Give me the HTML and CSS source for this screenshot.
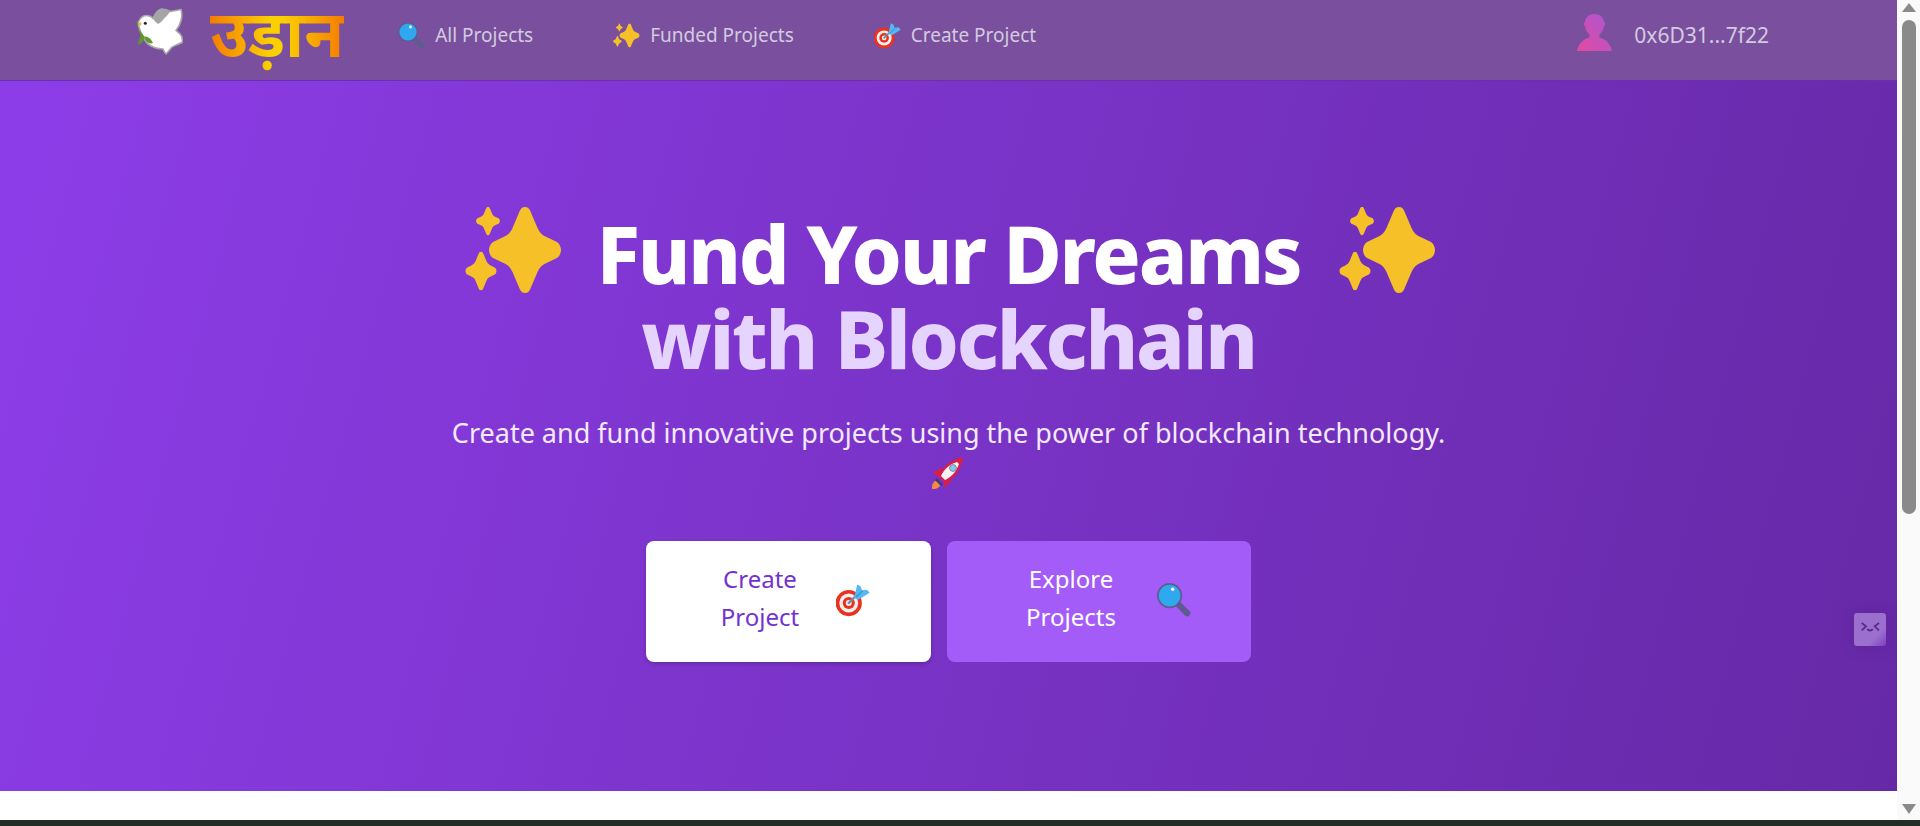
FILE: index.html
```html
<!DOCTYPE html>
<html lang="hi">
<head>
<meta charset="UTF-8" />
<meta name="viewport" content="width=device-width, initial-scale=1" />
<title>उड़ान</title>
<link rel="stylesheet" href="styles.css">
</head>
<body>

<svg class="defs" width="0" height="0" aria-hidden="true">
  <defs>
    <linearGradient id="userFill" x1="0" y1="1" x2="1" y2="0">
      <stop offset="0" stop-color="#e34a9f" />
      <stop offset="1" stop-color="#a957d6" />
    </linearGradient>
    <path id="star" d="M0 -43C3 -43 4.500 -41 5.500 -38.500L12.500 -22C14.500 -17.500 17 -15 21.500 -13L32 -8C34.500 -6.500 36 -3 36 0C36 3 34.500 6.500 32 8L21.500 13C17 15 14.500 17.500 12.500 22L5.500 38.500C4.500 41 3 43 0 43C-3 43 -4.500 41 -5.500 38.500L-12.500 22C-14.500 17.500 -17 15 -21.500 13L-32 8C-34.500 6.500 -36 3 -36 0C-36 -3 -34.500 -6.500 -32 -8L-21.500 -13C-17 -15 -14.500 -17.500 -12.500 -22L-5.500 -38.500C-4.500 -41 -3 -43 0 -43Z" />
    <symbol id="sparkles" viewBox="0 0 98 86">
      <g fill="#f5c028">
        <use href="#star" transform="translate(60 43)" />
        <use href="#star" transform="translate(23 14) scale(.33)" />
        <use href="#star" transform="translate(16 64) scale(.43 .45)" />
      </g>
    </symbol>
    <symbol id="target" viewBox="0 0 28 27">
      <circle cx="10.500" cy="16" r="10.800" fill="#e8331f" />
      <circle cx="10.500" cy="16" r="7.800" fill="#f3eeee" />
      <circle cx="10.500" cy="16" r="5" fill="#e8331f" />
      <circle cx="10.500" cy="16" r="2.400" fill="#f3eeee" />
      <path d="M10 16.500L17 9.500" stroke="#6f8fa8" stroke-width="1.800" />
      <path d="M15 11.500L17.500 .7L20 2L21.500 5.500L25.500 5L27.700 7.500L18 13.500Z" fill="#55b8f2" />
      <path d="M16.500 11L22 6" stroke="#2f8fd8" stroke-width="1" />
    </symbol>
    <symbol id="magnifier" viewBox="0 0 27 27">
      <path d="M16 16L24 24" stroke="#5f5a90" stroke-width="5" stroke-linecap="round" />
      <circle cx="10" cy="10" r="9.300" fill="#2ea9ef" stroke="#5f5a90" stroke-width="1.400" />
      <circle cx="12.500" cy="5" r="1.400" fill="#fff" />
    </symbol>
    <symbol id="rocket" viewBox="0 0 33 33">
      <path d="M0 33C-.5 29 1 26 4 24.500L8.500 29C7 32 4 33.500 0 33Z" fill="#f58a3c" />
      <path d="M4.500 22L11 28.500L9 30L3 24Z" fill="#3d3a78" />
      <path d="M10 11L.5 17L7 21ZM21 23L12 32L12 26Z" fill="#d81f4a" />
      <path d="M31 1C20 3 11 10 6 20L13 27C24 22 30 12 31 1Z" fill="#d81f4a" />
      <path d="M25 6C18 8 12 13 9 20L13 24C20 21 25 14 27 8Z" fill="#f7f3f3" />
      <circle cx="21" cy="12" r="3.400" fill="#8cc6ee" stroke="#7a8aa0" stroke-width="1" />
    </symbol>
    <symbol id="dove" viewBox="0 0 48 47">
      <path d="M3 15C5 10 8 7.500 11 7.500C14 7.500 16.500 8.500 18 10.500C20 6 23 1.500 26.500 1C30 1 33 2 35 3.500C39 3 43 2 46 1.500C47 5 47 9 46 12.500C45 17 43 20 41 22.500C44 25 47 27 47 30C47.500 32 47.500 33 47 34.500C43 36.500 39 37.500 36.500 39.500C34.500 42 33 44 31 46C29.500 44 28.500 42.500 28 41C23 41 17 39 13 36C10 33 8 30 6.500 26C5 23 4 19 3 15Z" fill="#fff" stroke="#a8a8a8" stroke-width="1.600" stroke-linejoin="round" />
      <path d="M18 10.500C20 6 23 1.500 26.500 1C30 1 33 2 35 3.500C33 7 30 9.500 29.500 10C27.500 13 25 15 23 16C21 14.500 19 12.500 18 10.500Z" fill="#a5a5a5" />
      <circle cx="10.300" cy="15.300" r="1.500" fill="#222" />
      <path d="M6.500 14L2.500 15.500L6 18Z" fill="#f2b13b" />
      <path d="M2 13C1.500 15 1.500 18 3 19L3 14Z" fill="#5d9a2e" />
      <path d="M3 20C4 24 5 26 6 28C4 30 3 34 3.500 37C6 35.500 9 33 9.500 29.500C9 27 5 23 3 20Z" fill="#5d9a2e" />
      <path d="M9 28.500C12 28 16 30 18 35C14 36.500 10 33.500 9 28.500Z" fill="#5d9a2e" />
    </symbol>
    <symbol id="person" viewBox="0 0 35 37">
      <path d="M17.500 0C23 0 26.500 3 27 8C28.500 8.500 28.500 11.500 27 12C26.500 16 24.500 19 22.500 20.500V23.500C29 25 33.500 30 35 37H0C1.500 30 6 25 12.500 23.500V20.500C10.500 19 8.500 16 8 12C6.500 11.500 6.500 8.500 8 8C8.500 3 12 0 17.500 0Z" fill="url(#userFill)" />
    </symbol>
  </defs>
</svg>

<div class="window">
  <main class="page">
    <nav class="navbar">
      <svg class="dove"><use href="#dove" /></svg>
      <span class="logo">उड़ान</span>
      <a class="nav-link first" href="#"><svg class="nav-icon"><use href="#magnifier" /></svg>All Projects</a>
      <a class="nav-link" href="#"><svg class="nav-icon"><use href="#sparkles" /></svg>Funded Projects</a>
      <a class="nav-link" href="#"><svg class="nav-icon"><use href="#target" /></svg>Create Project</a>
      <div class="account">
        <svg class="avatar"><use href="#person" /></svg>
        <span>0x6D31...7f22</span>
      </div>
    </nav>

    <section class="hero">
      <h1 class="title">
        <span class="title-row">
          <svg class="spark spark-left"><use href="#sparkles" /></svg>
          <span>Fund Your Dreams</span>
          <svg class="spark"><use href="#sparkles" /></svg>
        </span>
        <span class="title-accent">with Blockchain</span>
      </h1>
      <p class="lead">
        Create and fund innovative projects using the power of blockchain technology.
        <svg class="rocket"><use href="#rocket" /></svg>
      </p>
      <div class="actions">
        <a class="btn btn-white" href="#">
          <span class="btn-text">Create<br>Project</span>
          <svg class="btn-icon"><use href="#target" /></svg>
        </a>
        <a class="btn btn-purple" href="#">
          <span class="btn-text">Explore<br>Projects</span>
          <svg class="btn-icon"><use href="#magnifier" /></svg>
        </a>
      </div>
      <div class="widget">
        <svg viewBox="0 0 32 33" width="32" height="33">
          <path d="M7.700 10L12 13.300L7.700 17.300M25 10L20.700 13.300L25 17.300M13.300 16C14.500 18 17.500 18 18.700 16" fill="none" stroke="#5b2a8f" stroke-width="1.800" />
        </svg>
      </div>
    </section>
  </main>

  <aside class="scrollbar">
    <span class="arrow-up"></span>
    <span class="thumb"></span>
    <span class="arrow-down"></span>
  </aside>
</div>
<div class="taskbar"></div>

</body>
</html>
```

FILE: styles.css
```css
* { box-sizing: border-box; }
html, body { margin: 0; height: 100%; overflow: hidden; }
body { font-family: "Noto Sans", Arial, sans-serif; display: flex; flex-direction: column; background: #fff; }
a { text-decoration: none; }
.defs { position: absolute; }

.window { flex: 1; display: flex; min-height: 0; }
.page { flex: 1; display: flex; flex-direction: column; padding-bottom: 29px; }
.taskbar { height: 6px; background: #252b25; }

.navbar { height: 81px; flex: none; display: flex; align-items: center; padding: 0 128px 0 135px; background: #7a509e; border-bottom: 1px solid #6a2fb0; }
.dove { width: 48px; height: 47px; margin-top: -17px; }
.logo { margin-left: 27px; font-size: 65px; line-height: 80px; font-weight: 700; margin-top: -17px; background: linear-gradient(90deg, #f57c00, #fbd000 45%, #fbd000 55%, #f57c00); -webkit-background-clip: text; background-clip: text; color: transparent; }
.nav-link { display: flex; align-items: center; gap: 10px; margin-left: 80px; margin-top: -10px; font-size: 19px; color: #d3cbdf; }
.nav-link.first { margin-left: 54px; }
.nav-icon { width: 27px; height: 27px; }
.account { margin-left: auto; margin-top: -10px; display: flex; align-items: center; gap: 22px; font-size: 21px; color: #d3cbdf; }
.avatar { width: 35px; height: 37px; margin-top: -6px; }

.hero { position: relative; flex: 1; display: flex; flex-direction: column; align-items: center; padding-top: 129px; color: #fff; background: linear-gradient(105deg, #8d3de8, #6629a6); }
.title { margin: 0; font-size: 80px; line-height: 85px; font-weight: 800; letter-spacing: -2.200px; text-align: center; display: flex; flex-direction: column; align-items: center; }
.title-row { display: flex; align-items: center; gap: 38px; padding-left: 4px; }
.title-accent { color: #e4d4fe; }
.spark { width: 98px; height: 86px; margin: -4px 0 1px; }
.spark-left { margin-right: -4px; }
.lead { width: 1040px; margin: 33px 0 0; font-size: 27px; line-height: 40px; text-align: center; color: #f3e9ff; }
.rocket { display: block; width: 33px; height: 33px; margin: 3px auto 0; }

.actions { display: flex; gap: 16px; margin-top: 52px; }
.btn { height: 121px; display: flex; align-items: center; gap: 12px; padding: 0 48px; border-radius: 8px; font-size: 24px; line-height: 38px; }
.btn-text { display: block; text-align: center; margin-top: -7px; }
.btn-white { width: 285px; background: #fff; color: #7232cf; box-shadow: 0 2px 4px rgba(0,0,0,.2); }
.btn-white .btn-text { width: 132px; }
.btn-purple { width: 304px; background: #a45cf8; color: #fff; }
.btn-purple .btn-text { width: 152px; }
.btn-icon { width: 34px; height: 34px; margin: -3px 0 0 -2px; }

.widget { position: absolute; right: 11px; top: 532px; width: 32px; height: 33px; border-radius: 3px; background: linear-gradient(135deg, #9b6fce 70%, #7d3fc0); box-shadow: 0 0 14px rgba(70,20,110,.25); }
.widget svg { display: block; }

.scrollbar { position: relative; width: 23px; flex: none; background: #fafafa; }
.arrow-up, .arrow-down { position: absolute; left: 5px; width: 0; height: 0; border-left: 7px solid transparent; border-right: 7px solid transparent; }
.arrow-up { top: 3px; border-bottom: 9px solid #8a8a8a; }
.arrow-down { bottom: 6px; border-top: 10px solid #8a8a8a; }
.thumb { position: absolute; left: 5px; top: 20px; width: 14px; height: 494px; border-radius: 7px; background: #8a8a8a; }
```
